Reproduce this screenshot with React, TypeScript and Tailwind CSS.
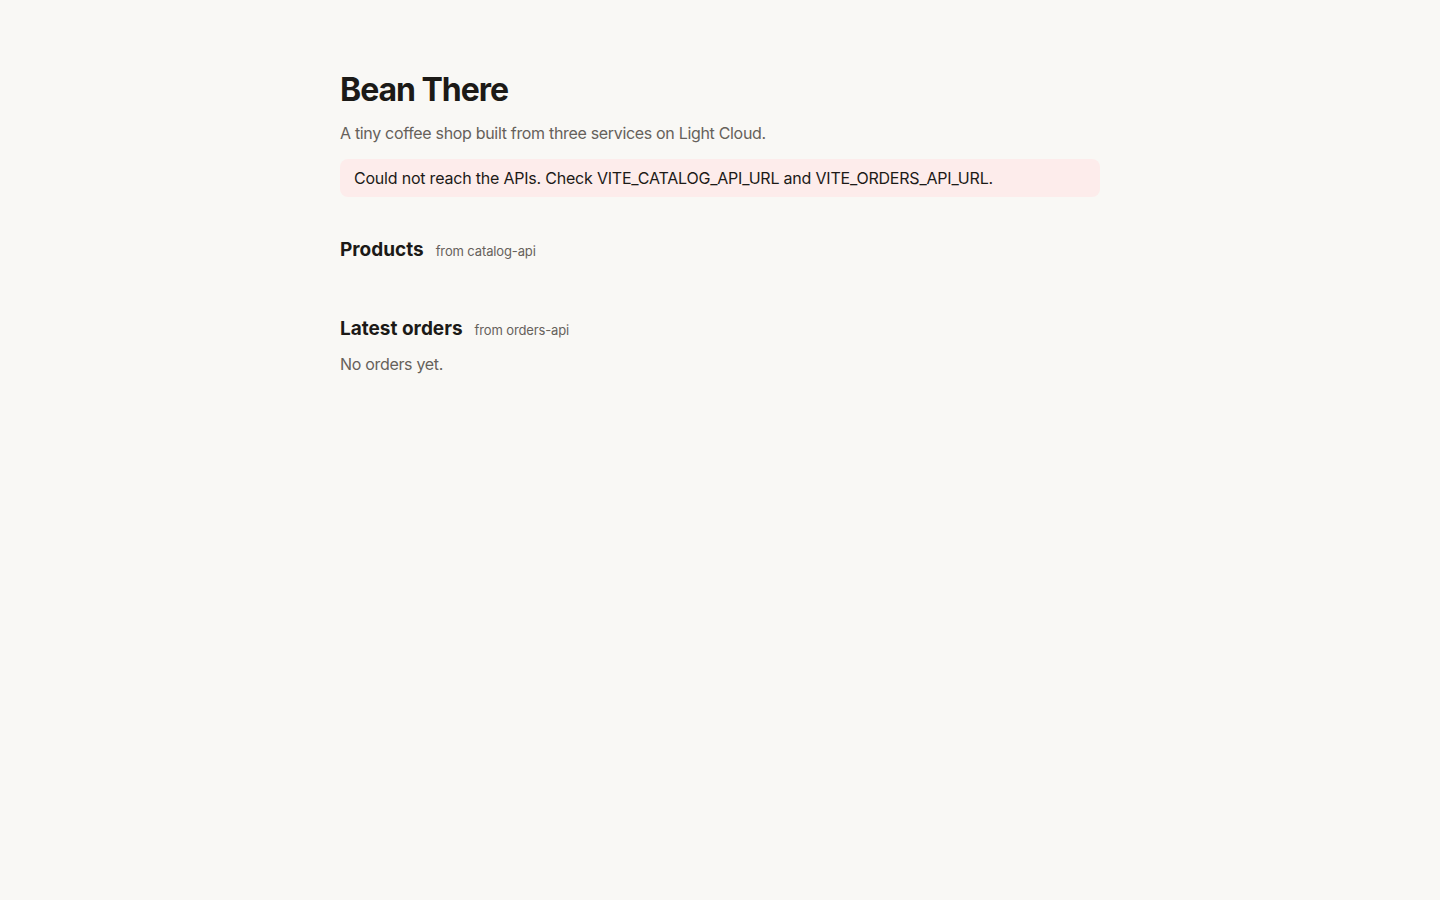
export default function App() {
  return (
    <div
      className="min-h-screen bg-[#f9f8f5] text-[#1c1a17]"
      style={{ fontFamily: "Inter, 'Noto Sans', sans-serif" }}
    >
      <main className="mx-auto max-w-[760px] pt-[70px]">
        <h1 className="text-[32px] font-bold leading-[40px] tracking-[-0.032em]">Bean There</h1>
        <p className="mt-[11px] text-base leading-6 tracking-[-0.02em] text-[#66615b]">
          A tiny coffee shop built from three services on Light Cloud.
        </p>
        <div className="mt-[14px] rounded-lg bg-[#fdeceb] px-[14px] py-[7px] text-base leading-6 tracking-[-0.013em] text-[#1c1a17]">
          Could not reach the APIs. Check VITE_CATALOG_API_URL and VITE_ORDERS_API_URL.
        </div>

        <section className="mt-[39px]">
          <div className="flex items-baseline gap-3">
            <h2 className="text-[19px] font-bold leading-7">Products</h2>
            <span className="text-[13px] tracking-[-0.01em] text-[#66615b]">from catalog-api</span>
          </div>
        </section>

        <section className="mt-[51px]">
          <div className="flex items-baseline gap-3">
            <h2 className="text-[19px] font-bold leading-7">Latest orders</h2>
            <span className="text-[13px] tracking-[-0.01em] text-[#66615b]">from orders-api</span>
          </div>
          <p className="mt-[9px] text-base leading-6 tracking-[-0.02em] text-[#66615b]">No orders yet.</p>
        </section>
      </main>
    </div>
  );
}
